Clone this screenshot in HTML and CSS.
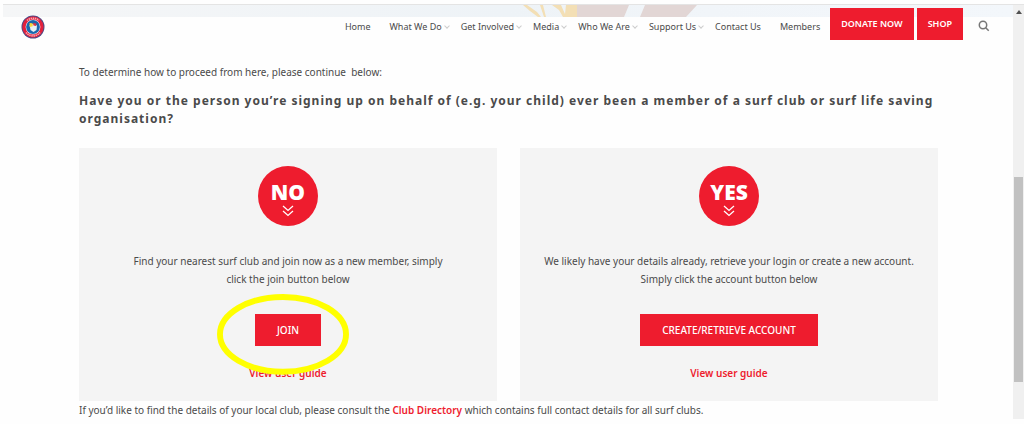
FILE: index.html
```
<!DOCTYPE html>
<html lang="en">
<head>
  <meta charset="UTF-8" />
  <meta name="viewport" content="width=device-width, initial-scale=1.0"/>
  <title>Join a Surf Club</title>
  <link rel="stylesheet" href="styles.css">
</head>
<body>

  <div class="window">
    <div class="page">

      <header class="header">
        <!-- hero image peeking out above the sticky menu -->
        <svg class="hero" viewBox="0 0 1010 12" preserveAspectRatio="none" aria-hidden="true">
          <defs>
            <linearGradient id="sky">
              <stop offset="0" stop-color="#f5f6f7"/>
              <stop offset="0.5" stop-color="#eef3f7"/>
              <stop offset="0.7" stop-color="#f1f5f9"/>
              <stop offset="1" stop-color="#f3f7fb"/>
            </linearGradient>
          </defs>
          <rect width="1010" height="12" fill="url(#sky)"/>
          <path d="M520 0h4l10 7 4 5h-3l-8-6zM537 0h3l3 12h-2zM549 0h9l4 9 1-9h11v12h-14l-4-7z" fill="#f3dfb5"/>
          <path d="M574 0h52l-5 12h-47zM642 0h52l-11 12h-46z" fill="#e2d6d5"/>
        </svg>

        <a href="#" class="logo" aria-label="Surf Life Saving">
          <svg width="24" height="24" viewBox="0 0 24 24">
            <circle cx="12" cy="12" r="11.5" fill="#4a4a86"/>
            <circle cx="12" cy="12" r="10.6" fill="#e3213c"/>
            <path d="M6 5.5a9 9 0 0 1 12 0" fill="none" stroke="#f3a9b3" stroke-width="1.6" stroke-dasharray="1.4 .7"/>
            <path d="M5 17.500a9 9 0 0 0 14 0" fill="none" stroke="#f3a9b3" stroke-width="1.6" stroke-dasharray="1.4 .7"/>
            <circle cx="12" cy="12" r="7.400" fill="#fff"/>
            <circle cx="12" cy="12" r="6.900" fill="#1b67ad"/>
            <path d="M8.500 10l3.500-1 4 1.500-.5 4.500-3 2-3-2z" fill="#e8f1f5"/>
            <path d="M8.500 8l3 .2.300 3-3 .8z" fill="#f5d83a"/>
            <path d="M12 8l3.500.5-.5 2.500-2.500-.5z" fill="#dc3547"/>
          </svg>
        </a>

        <nav class="menu">
          <ul>
            <li><a href="#">Home</a></li>
            <li class="has-sub"><a href="#">What We Do</a></li>
            <li class="has-sub"><a href="#">Get Involved</a></li>
            <li class="has-sub"><a href="#">Media</a></li>
            <li class="has-sub"><a href="#">Who We Are</a></li>
            <li class="has-sub"><a href="#">Support Us</a></li>
            <li><a href="#">Contact Us</a></li>
            <li><a href="#">Members</a></li>
          </ul>
          <a href="#" class="btn btn-menu">DONATE NOW</a>
          <a href="#" class="btn btn-menu">SHOP</a>
          <button type="button" class="search" aria-label="Search">
            <svg width="12" height="12" viewBox="0 0 12 12" fill="none" stroke="#777" stroke-width="1.500">
              <circle cx="5" cy="5" r="3.700"/>
              <path d="M7.700 7.700l3 3"/>
            </svg>
          </button>
        </nav>
      </header>

      <main class="content">
        <p>To determine how to proceed from here, please continue &nbsp;below:</p>
        <h2>Have you or the person you’re signing up on behalf of (e.g. your child) ever been a member of a surf club or surf life saving organisation?</h2>

        <div class="options">
          <section class="option">
            <div class="badge">
              <span>NO</span>
              <svg width="12" height="12" viewBox="0 0 12 12" fill="none" stroke="#fff" stroke-width="1.300"><path d="M1 1l5 4.500L11 1M1 6l5 4.500L11 6"/></svg>
            </div>
            <p>Find your nearest surf club and join now as a new member, simply click the join button below</p>
            <div class="action">
              <a href="#" class="btn">JOIN</a>
              <svg class="highlight" viewBox="0 0 134 84" aria-hidden="true"><ellipse cx="67" cy="42" rx="64" ry="38" fill="none" stroke="#ff0" stroke-width="6"/></svg>
            </div>
            <a href="#" class="guide">View user guide</a>
          </section>

          <section class="option">
            <div class="badge">
              <span>YES</span>
              <svg width="12" height="12" viewBox="0 0 12 12" fill="none" stroke="#fff" stroke-width="1.300"><path d="M1 1l5 4.500L11 1M1 6l5 4.500L11 6"/></svg>
            </div>
            <p>We likely have your details already, retrieve your login or create a new account. Simply click the account button below</p>
            <div class="action">
              <a href="#" class="btn">CREATE/RETRIEVE ACCOUNT</a>
            </div>
            <a href="#" class="guide">View user guide</a>
          </section>
        </div>

        <p>If you’d like to find the details of your local club, please consult the <a href="#">Club Directory</a> which contains full contact details for all surf clubs.</p>
      </main>

    </div>

    <div class="scrollbar">
      <svg width="6" height="4" viewBox="0 0 6 4" aria-hidden="true"><path d="M0 4l3-4 3 4z" fill="#505050"/></svg>
      <div class="thumb"></div>
    </div>
  </div>

</body>
</html>
```
FILE: styles.css
```
* {
  box-sizing: border-box;
}
body {
  margin: 0;
  padding: 4px 0 5px 3px;
  min-height: 100vh;
  display: flex;
  background-color: #fefefe;
  font-family: "Noto Sans", sans-serif;
  font-size: 10px;
  line-height: 18px;
  color: #4a4a4a;
}
a {
  color: #ee1c2e;
  text-decoration: none;
  font-weight: 600;
}
p {
  margin: 0;
}
.window {
  flex: 1;
  display: flex;
  border-top: 1px solid #e4e4e4;
}
.page {
  flex: 1;
}

/* header */
.header {
  position: relative;
  display: flex;
  justify-content: space-between;
  align-items: flex-start;
  padding: 3px 23px 0 18px;
}
.hero {
  position: absolute;
  top: 0;
  left: 0;
  width: 100%;
  height: 12px;
}
.logo {
  position: relative;
  padding-top: 7px;
}
.logo svg {
  display: block;
}
.menu {
  position: relative;
  display: flex;
  align-items: center;
}
.menu ul {
  list-style: none;
  display: flex;
  gap: 19px;
  margin: 0;
  padding: 4px 10px 0 0;
}
.menu li {
  position: relative;
}
.menu li a {
  font-size: 9px;
  font-weight: normal;
  color: #4a4a4a;
}
.has-sub::after {
  content: "";
  position: absolute;
  top: 7px;
  right: -7px;
  width: 3px;
  height: 3px;
  border: solid #ccc;
  border-width: 0 1px 1px 0;
  transform: rotate(45deg);
}
.btn {
  display: inline-block;
  padding: 7px 22px;
  background-color: #ee1c2e;
  color: #fff;
  font-weight: 500;
}
.btn-menu {
  padding: 7px 11px;
  margin-right: 3px;
  font-size: 9px;
  font-weight: 600;
}
.search {
  margin-left: 12px;
  padding: 4px 0 0;
  border: none;
  background: none;
  cursor: pointer;
}
.search svg {
  display: block;
}

/* content */
.content {
  padding: 23px 75px 0 76px;
}
h2 {
  margin: 11px 0 20px;
  font-size: 12px;
  font-weight: bold;
  letter-spacing: 1px;
}
.options {
  display: grid;
  grid-template-columns: 1fr 1fr;
  gap: 23px;
}
.option {
  display: flex;
  flex-direction: column;
  align-items: center;
  padding: 18px 20px 19px;
  background-color: #f4f4f4;
  text-align: center;
}
.option p {
  max-width: 378px;
  margin: 26px 0;
}
.option:first-child p {
  max-width: 330px;
}
.badge {
  display: flex;
  flex-direction: column;
  align-items: center;
  width: 60px;
  height: 60px;
  padding-top: 15px;
  border-radius: 50%;
  background-color: #ee1c2e;
  color: #fff;
  font-size: 21px;
  font-weight: 900;
  line-height: 22px;
}
.badge svg {
  margin-top: 2px;
}
.action {
  position: relative;
}
.highlight {
  position: absolute;
  top: -21px;
  left: -38px;
  width: 132px;
}
.guide {
  margin-top: 18px;
}

/* window scrollbar */
.scrollbar {
  display: flex;
  flex-direction: column;
  align-items: center;
  width: 11px;
  padding-top: 5px;
  background-color: #f0f0f0;
}
.thumb {
  width: 9px;
  height: 50%;
  margin-top: 163px;
  background-color: #c1c1c1;
}
```
